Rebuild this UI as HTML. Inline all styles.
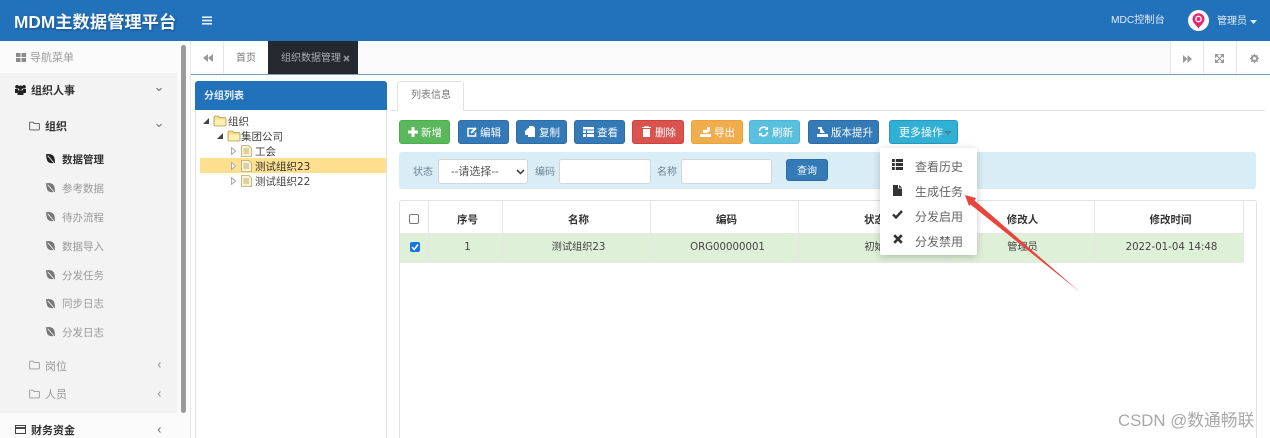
<!DOCTYPE html>
<html lang="zh">
<head>
<meta charset="utf-8">
<title>MDM主数据管理平台</title>
<style>
html,body{margin:0;padding:0;width:1270px;height:438px;overflow:hidden;background:#fff}
body{position:relative;font-family:"Liberation Sans","Noto Sans CJK SC",sans-serif;font-size:10.5px;color:#555}
#w{left:0;top:0;width:1270px;height:438px;overflow:hidden;background:#fff;filter:blur(.35px)}
div,span,svg{position:absolute}
.t{white-space:nowrap;line-height:16px;height:16px}
.btn{top:120px;height:24px;border-radius:3px;color:#fff;font-size:10.5px;line-height:24px;white-space:nowrap;box-sizing:border-box}
.btn span{top:0}
.blue{background:#337ab7;border:1px solid #2e6da4}
.m{font-size:11px;color:#8d8d8d}
.d{font-size:11px;color:#777}
.th{top:212px;font-weight:bold;color:#333;text-align:center;font-size:10.5px;line-height:16px}
.td{top:240px;color:#444;text-align:center;font-size:10.2px;line-height:16px;font-family:"DejaVu Sans","Noto Sans CJK SC",sans-serif}
.vl{width:1px;background:#e6e6e6}
.menu{left:915px;font-size:12px;color:#666}
.tree{font-size:10.5px;color:#444;font-family:"DejaVu Sans","Noto Sans CJK SC",sans-serif}
</style>
</head>
<body>
<svg width="0" height="0" style="position:absolute">
<defs>
<symbol id="leaf" viewBox="0 0 12 12"><path d="M1 1.500C5 .5 10 1.500 10.500 6.500 11 8.500 10.500 10 11 11L9.500 10.800C8 11.500 4 11.500 2.500 8.500 1.500 6.500 1.500 3.500 1 1.500Z" fill="currentColor"/><path d="M3 3 9.500 10.500" stroke="#f3f3f3" stroke-width="1"/></symbol>
<symbol id="fold" viewBox="0 0 12 10"><path d="M1.500.8H4.500L5.500 2.200H10.500Q11.300 2.200 11.300 3V8.500Q11.300 9.300 10.500 9.300H1.500Q.7 9.300 .7 8.500V1.600Q.7.800 1.500.8Z" fill="none" stroke="currentColor" stroke-width="1"/></symbol>
<symbol id="tfold" viewBox="0 0 14 12"><path d="M1 3V10.500C1 11 1.500 11 2 11H11.500C12.500 11 13 10.500 13 10V4C13 3 12.500 2.500 11.500 2.500H6.500L5.500 1H2C1.500 1 1 1.800 1 3Z" fill="#f7dd85" stroke="#b39a4d" stroke-width=".8"/><path d="M2 4.500H12.500V10.500H2Z" fill="#fdf0b4"/></symbol>
<symbol id="tdoc" viewBox="0 0 11 12"><path d="M.5.500H8L10.500 3V11.500H.5Z" fill="#fbf3cf" stroke="#b3a877" stroke-width=".8"/><path d="M2.500 4H8M2.500 6H8M2.500 8H8" stroke="#a9965a" stroke-width=".8"/></symbol>
<symbol id="chd" viewBox="0 0 8 5"><path d="M1.500 1.200 4 3.500 6.500 1.200" fill="none" stroke="currentColor" stroke-width="1"/></symbol>
<symbol id="chl" viewBox="0 0 5 8"><path d="M3.500 1.500 1.300 4 3.500 6.500" fill="none" stroke="currentColor" stroke-width="1"/></symbol>
</defs>
</svg>
<div id="w">

<!-- header -->
<div style="left:0;top:0;width:1270px;height:41px;background:#2271bb"></div>
<span class="t" style="left:14px;top:13px;font-size:17.3px;line-height:18px;height:18px;font-weight:bold;color:#f4f8fb;text-shadow:1px 1px 2px rgba(0,0,0,.3)">MDM主数据管理平台</span>
<svg style="left:202px;top:16px" width="10" height="9"><path d="M0 1.200H10M0 4.500H10M0 7.800H10" stroke="#e6eff7" stroke-width="1.700"/></svg>
<span class="t" style="left:1111px;top:13px;color:#e4eef7;font-size:10.2px">MDC控制台</span>
<div style="left:1188px;top:10px;width:21px;height:21px;border-radius:50%;background:#fff"></div>
<svg style="left:1192px;top:13px" width="13" height="16" viewBox="0 0 13 16"><path d="M6.500 15.500C4.500 12 .5 9.500 .5 6.200A6 6 0 0 1 12.500 6.200C12.500 9.500 8.500 12 6.500 15.500Z" fill="#e5266f"/><circle cx="6.500" cy="6" r="3.400" fill="#fff"/><circle cx="6.500" cy="6" r="2" fill="#e5266f"/></svg>
<span class="t" style="left:1217px;top:14px;color:#e4eef7;font-size:10px">管理员</span>
<svg style="left:1250px;top:20px" width="7" height="4"><path d="M0 0H7L3.500 4Z" fill="#e4eef7"/></svg>

<!-- sidebar -->
<div style="left:0;top:41px;width:190px;height:397px;background:#fbfbfc"></div>
<div style="left:0;top:73px;width:177px;height:340px;background:#f3f3f3"></div>
<div style="left:181px;top:45px;width:5px;height:368px;background:#9a9a9a;border-radius:3px"></div>
<div style="left:190px;top:41px;width:1px;height:397px;background:#e7e7e7"></div>

<svg style="left:16px;top:53px" width="10" height="9"><path d="M0 0H4.500V4H0ZM5.500 0H10V4H5.500ZM0 5H4.500V9H0ZM5.500 5H10V9H5.500Z" fill="#8a8a8a"/></svg>
<span class="t m" style="left:30px;top:50px;color:#9b9b9b">导航菜单</span>

<svg style="left:15px;top:85px" width="11" height="10" viewBox="0 0 11 10"><circle cx="2" cy="1.800" r="1.800" fill="#222"/><circle cx="9" cy="1.800" r="1.800" fill="#222"/><circle cx="5.500" cy="2.800" r="2.300" fill="#222"/><path d="M0 4H3V8H0ZM8 4H11V8H8ZM2.500 5.200H8.500V10H2.500Z" fill="#222"/></svg>
<span class="t" style="left:31px;top:83px;font-size:11px;color:#333;font-weight:bold">组织人事</span>
<svg style="left:155px;top:87px;color:#666" width="8" height="5"><use href="#chd"/></svg>

<svg style="left:29px;top:121px;color:#555" width="11" height="10"><use href="#fold"/></svg>
<span class="t" style="left:45px;top:119px;font-size:11px;color:#333;font-weight:bold">组织</span>
<svg style="left:155px;top:123px;color:#666" width="8" height="5"><use href="#chd"/></svg>

<svg style="left:45px;top:153px;color:#222" width="11" height="11"><use href="#leaf"/></svg>
<span class="t" style="left:62px;top:152px;font-size:10.5px;color:#333;font-weight:bold">数据管理</span>
<svg style="left:45px;top:182px;color:#777" width="11" height="11"><use href="#leaf"/></svg>
<span class="t d" style="left:62px;top:181px;font-size:10.5px;color:#999">参考数据</span>
<svg style="left:45px;top:211px;color:#777" width="11" height="11"><use href="#leaf"/></svg>
<span class="t d" style="left:62px;top:210px;font-size:10.5px;color:#999">待办流程</span>
<svg style="left:45px;top:240px;color:#777" width="11" height="11"><use href="#leaf"/></svg>
<span class="t d" style="left:62px;top:239px;font-size:10.5px;color:#999">数据导入</span>
<svg style="left:45px;top:269px;color:#777" width="11" height="11"><use href="#leaf"/></svg>
<span class="t d" style="left:62px;top:268px;font-size:10.5px;color:#999">分发任务</span>
<svg style="left:45px;top:298px;color:#777" width="11" height="11"><use href="#leaf"/></svg>
<span class="t d" style="left:62px;top:296px;font-size:10.5px;color:#999">同步日志</span>
<svg style="left:45px;top:326px;color:#777" width="11" height="11"><use href="#leaf"/></svg>
<span class="t d" style="left:62px;top:325px;font-size:10.5px;color:#999">分发日志</span>

<svg style="left:29px;top:360px;color:#999" width="11" height="10"><use href="#fold"/></svg>
<span class="t m" style="left:45px;top:359px;color:#999">岗位</span>
<svg style="left:157px;top:361px;color:#999" width="5" height="8"><use href="#chl"/></svg>
<svg style="left:29px;top:389px;color:#999" width="11" height="10"><use href="#fold"/></svg>
<span class="t m" style="left:45px;top:387px;color:#999">人员</span>
<svg style="left:157px;top:390px;color:#999" width="5" height="8"><use href="#chl"/></svg>

<svg style="left:15px;top:425px" width="11" height="9"><rect x=".5" y=".5" width="10" height="8" fill="none" stroke="#444"/><rect x="1" y="2" width="9" height="2" fill="#444"/></svg>
<span class="t" style="left:31px;top:423px;font-size:11px;color:#333;font-weight:bold">财务资金</span>
<svg style="left:157px;top:426px;color:#777" width="5" height="8"><use href="#chl"/></svg>

<!-- tab bar -->
<div style="left:191px;top:41px;width:1079px;height:33px;background:#fafafa"></div>
<div style="left:191px;top:74px;width:1079px;height:1px;background:#7d9db5"></div>
<div style="left:191px;top:41px;width:32px;height:33px;background:#fff"></div>
<div class="vl" style="left:223px;top:41px;height:33px"></div>
<div style="left:224px;top:41px;width:44px;height:33px;background:#fff"></div>
<svg style="left:203px;top:54px" width="10" height="8"><path d="M5 0V8L0 4ZM10 0V8L5 4Z" fill="#999"/></svg>
<span class="t" style="left:236px;top:51px;color:#777;font-size:10px">首页</span>
<div style="left:268px;top:41px;width:90px;height:33px;background:#23292e"></div>
<span class="t" style="left:281px;top:51px;color:#a7aeb3;font-size:10px">组织数据管理</span>
<svg style="left:343px;top:55px" width="7" height="7"><path d="M1 1 6 6M6 1 1 6" stroke="#8b9297" stroke-width="1.800"/></svg>
<div style="left:1171px;top:41px;width:99px;height:33px;background:#fff"></div>
<div class="vl" style="left:1170px;top:41px;height:33px"></div>
<div class="vl" style="left:1203px;top:41px;height:33px"></div>
<div class="vl" style="left:1236px;top:41px;height:33px"></div>
<svg style="left:1183px;top:55px" width="9" height="8"><path d="M0 0V8L4.500 4ZM4.500 0V8L9 4Z" fill="#999"/></svg>
<svg style="left:1215px;top:54px" width="9" height="9"><path d="M0 0H3.500L0 3.500ZM9 0H5.500L9 3.500ZM0 9H3.500L0 5.500ZM9 9H5.500L9 5.500ZM2 2 7 7M7 2 2 7" fill="#999" stroke="#999"/></svg>
<svg style="left:1250px;top:54px" width="9" height="9"><circle cx="4.500" cy="4.500" r="2.800" fill="none" stroke="#999" stroke-width="1.800"/><path d="M4.500 0V9M0 4.500H9M1.300 1.300 7.700 7.700M7.700 1.300 1.300 7.700" stroke="#999" stroke-width="1"/><circle cx="4.500" cy="4.500" r="1.500" fill="#fff"/></svg>

<!-- tree panel -->
<div style="left:195px;top:81px;width:192px;height:360px;box-sizing:border-box;border:1px solid #e2e2e2;border-radius:3px;background:#fff"></div>
<div style="left:195px;top:81px;width:192px;height:29px;background:#2271bb;border-radius:3px 3px 0 0"></div>
<span class="t" style="left:204px;top:89px;color:#e8f1f8;font-weight:bold;font-size:10px">分组列表</span>
<div style="left:200px;top:158px;width:186px;height:15px;background:#ffe08f"></div>
<svg style="left:203px;top:118px" width="6" height="6"><path d="M6 0V6H0Z" fill="#444"/></svg>
<svg style="left:213px;top:115px" width="14" height="12"><use href="#tfold"/></svg>
<span class="t tree" style="left:228px;top:114px">组织</span>
<svg style="left:217px;top:133px" width="6" height="6"><path d="M6 0V6H0Z" fill="#444"/></svg>
<svg style="left:227px;top:130px" width="14" height="12"><use href="#tfold"/></svg>
<span class="t tree" style="left:241px;top:129px">集团公司</span>
<svg style="left:231px;top:147px" width="5" height="8"><path d="M.5.500 4.500 4 .5 7.500Z" fill="#fff" stroke="#aaa"/></svg>
<svg style="left:241px;top:145px" width="11" height="12"><use href="#tdoc"/></svg>
<span class="t tree" style="left:255px;top:144px">工会</span>
<svg style="left:231px;top:162px" width="5" height="8"><path d="M.5.500 4.500 4 .5 7.500Z" fill="#fff" stroke="#aaa"/></svg>
<svg style="left:241px;top:160px" width="11" height="12"><use href="#tdoc"/></svg>
<span class="t tree" style="left:255px;top:159px;color:#333">测试组织23</span>
<svg style="left:231px;top:177px" width="5" height="8"><path d="M.5.500 4.500 4 .5 7.500Z" fill="#fff" stroke="#aaa"/></svg>
<svg style="left:241px;top:175px" width="11" height="12"><use href="#tdoc"/></svg>
<span class="t tree" style="left:255px;top:174px">测试组织22</span>

<!-- right tabs -->
<div style="left:391px;top:110px;width:874px;height:1px;background:#e2e2e2"></div>
<div style="left:397px;top:81px;width:67px;height:30px;box-sizing:border-box;border:1px solid #e2e2e2;border-bottom:0;border-radius:3px 3px 0 0;background:#fff"></div>
<span class="t" style="left:411px;top:88px;color:#777;font-size:10px">列表信息</span>

<!-- toolbar -->
<div class="btn" style="left:399px;width:51px;background:#5cb85c;border:1px solid #4cae4c"><svg style="left:8px;top:6px" width="10" height="10"><path d="M5 0V10M0 5H10" stroke="#fff" stroke-width="3"/></svg><span style="left:21px">新增</span></div>
<div class="btn blue" style="left:458px;width:51px"><svg style="left:8px;top:6px" width="10" height="10"><path d="M8 1.500H1V9H8.500V5.500" fill="none" stroke="#fff" stroke-width="1.500"/><path d="M4 6 9 1" stroke="#fff" stroke-width="2"/></svg><span style="left:21px">编辑</span></div>
<div class="btn blue" style="left:516px;width:51px"><svg style="left:8px;top:5px" width="11" height="12"><path d="M4 0H8L10 2V11H3V9H0V5L3 2H4Z" fill="#fff"/></svg><span style="left:22px">复制</span></div>
<div class="btn blue" style="left:574px;width:51px"><svg style="left:8px;top:6px" width="11" height="10"><path d="M0 0H11V2.500H0ZM0 3.500H3V6H0ZM4 3.500H11V6H4ZM0 7H3V10H0ZM4 7H11V10H4Z" fill="#fff"/></svg><span style="left:22px">查看</span></div>
<div class="btn" style="left:632px;width:52px;background:#d9534f;border:1px solid #d43f3a"><svg style="left:9px;top:5px" width="9" height="11"><path d="M0 1.500H9M3 1.500V0H6V1.500" stroke="#fff" fill="none"/><path d="M1 3H8V11H1Z" fill="#fff"/></svg><span style="left:22px">删除</span></div>
<div class="btn" style="left:691px;width:52px;background:#f0ad4e;border:1px solid #eea236"><svg style="left:8px;top:5px" width="11" height="12"><path d="M0 8H11V11H0ZM3 7V4H7V1L10 1V5L7 7Z" fill="#fff"/></svg><span style="left:22px">导出</span></div>
<div class="btn" style="left:749px;width:51px;background:#5bc0de;border:1px solid #46b8da"><svg style="left:8px;top:5px" width="11" height="11" viewBox="0 0 11 11"><path d="M1.500 5A4 4 0 0 1 8.500 2.500M9.500 6A4 4 0 0 1 2.500 8.500" fill="none" stroke="#fff" stroke-width="1.500"/><path d="M10 .5V4H6.500ZM1 10.500V7H4.500Z" fill="#fff"/></svg><span style="left:22px">刷新</span></div>
<div class="btn blue" style="left:808px;width:71px"><svg style="left:8px;top:5px" width="11" height="12"><path d="M0 8H11V11H0ZM3 7V3H1V1H5V3L8 7Z" fill="#fff"/></svg><span style="left:22px">版本提升</span></div>
<div class="btn" style="left:889px;width:69px;background:#31b0d5;border:1px solid #269abc"><span style="left:9px;font-size:11px">更多操作</span><svg style="left:54px;top:10px" width="8" height="4"><path d="M0 0H8L4 4Z" fill="#4f7f93"/></svg></div>

<!-- search bar -->
<div style="left:399px;top:152px;width:857px;height:37px;background:#d9edf7;border-radius:3px"></div>
<span class="t" style="left:413px;top:165px;color:#6b8492;font-size:10px">状态</span>
<div style="left:438px;top:159px;width:90px;height:25px;box-sizing:border-box;background:#fff;border:1px solid #d5d5d5;border-radius:3px"></div>
<span class="t" style="left:451px;top:164px;color:#555;font-size:11px">--请选择--</span>
<svg style="left:516px;top:169px;color:#333" width="9" height="6"><path d="M1 1 4.500 4.500 8 1" fill="none" stroke="#333" stroke-width="1.500"/></svg>
<span class="t" style="left:535px;top:165px;color:#6b8492;font-size:10px">编码</span>
<div style="left:559px;top:159px;width:92px;height:25px;box-sizing:border-box;background:#fff;border:1px solid #d5d5d5;border-radius:3px"></div>
<span class="t" style="left:657px;top:165px;color:#6b8492;font-size:10px">名称</span>
<div style="left:681px;top:159px;width:91px;height:25px;box-sizing:border-box;background:#fff;border:1px solid #d5d5d5;border-radius:3px"></div>
<div class="btn blue" style="left:786px;top:159px;width:42px;height:22px;line-height:23px;text-align:center;font-size:10px"><span style="left:10px">查询</span></div>

<!-- table -->
<div style="left:399px;top:200px;width:858px;height:250px;box-sizing:border-box;border:1px solid #e2e2e2;border-radius:3px"></div>
<div style="left:400px;top:233px;width:843px;height:1px;background:#e6e6e6"></div>
<div style="left:400px;top:234px;width:843px;height:28px;background:#dff0d8"></div>
<div style="left:400px;top:262px;width:843px;height:1px;background:#e8e8e8"></div>
<div class="vl" style="left:428px;top:201px;height:61px"></div>
<div class="vl" style="left:502px;top:201px;height:61px"></div>
<div class="vl" style="left:650px;top:201px;height:61px"></div>
<div class="vl" style="left:798px;top:201px;height:61px"></div>
<div class="vl" style="left:946px;top:201px;height:61px"></div>
<div class="vl" style="left:1094px;top:201px;height:61px"></div>
<div class="vl" style="left:1243px;top:201px;height:61px"></div>
<div style="left:409px;top:214px;width:10px;height:10px;box-sizing:border-box;border:1px solid #777;border-radius:2px;background:#fff"></div>
<div style="left:410px;top:242px;width:10px;height:10px;border-radius:2px;background:#1a73e8"></div>
<svg style="left:410px;top:242px" width="10" height="10"><path d="M2 5 4.200 7.500 8 2.500" fill="none" stroke="#fff" stroke-width="1.600"/></svg>
<span class="th" style="left:430px;width:75px">序号</span>
<span class="th" style="left:504px;width:149px">名称</span>
<span class="th" style="left:652px;width:149px">编码</span>
<span class="th" style="left:800px;width:149px">状态</span>
<span class="th" style="left:948px;width:149px">修改人</span>
<span class="th" style="left:1096px;width:149px">修改时间</span>
<span class="td" style="left:430px;width:75px">1</span>
<span class="td" style="left:504px;width:149px">测试组织23</span>
<span class="td" style="left:653px;width:149px">ORG00000001</span>
<span class="td" style="left:800px;width:149px">初始</span>
<span class="td" style="left:948px;width:149px">管理员</span>
<span class="td" style="left:1097px;width:149px">2022-01-04 14:48</span>

<!-- dropdown -->
<div style="left:880px;top:148px;width:97px;height:107px;background:#fff;border-radius:2px;box-shadow:0 2px 8px rgba(0,0,0,.22)"></div>
<svg style="left:892px;top:159px" width="11" height="11"><path d="M0 0H2.800V3H0ZM3.800 0H11V3H3.800ZM0 4H2.800V7H0ZM3.800 4H11V7H3.800ZM0 8H2.800V11H0ZM3.800 8H11V11H3.800Z" fill="#333"/></svg>
<span class="t menu" style="top:159px">查看历史</span>
<svg style="left:893px;top:185px" width="9" height="11"><path d="M0 0H5V3.500H9V11H0ZM6 0 9 2.800H6Z" fill="#333"/></svg>
<span class="t menu" style="top:184px">生成任务</span>
<svg style="left:892px;top:210px" width="11" height="9"><path d="M1 4.500 4 7.500 10 1" fill="none" stroke="#333" stroke-width="2.400"/></svg>
<span class="t menu" style="top:209px">分发启用</span>
<svg style="left:893px;top:234px" width="10" height="10"><path d="M1.200 1.200 8.800 8.800M8.800 1.200 1.200 8.800" stroke="#333" stroke-width="2.600"/></svg>
<span class="t menu" style="top:234px">分发禁用</span>

<!-- arrow -->
<svg style="left:955px;top:185px" width="135" height="115"><path d="M10 10 21 13 19.500 15.500 125 107 15.500 19.500 14 21Z" fill="#e8443c"/></svg>

<!-- watermark -->
<span class="t" style="left:1118px;top:412px;font-size:16.8px;line-height:18px;height:18px;color:#a8a8a8">CSDN @数通畅联</span>
</div>
</body>
</html>
